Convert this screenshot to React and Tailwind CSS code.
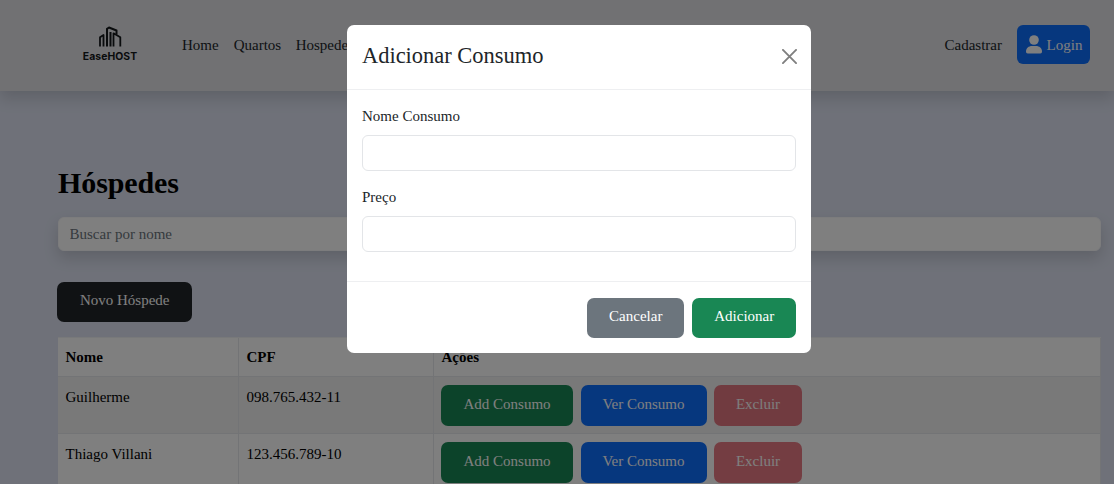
const guests = [
  { name: 'Guilherme', cpf: '098.765.432-11' },
  { name: 'Thiago Villani', cpf: '123.456.789-10' },
];

const buttonBase = 'rounded-[7px] text-center leading-[22px] flex justify-center shrink-0 items-start';

function Logo() {
  return (
    <div className="flex w-[56px] flex-col items-center text-[#15181b]">
      <svg width="24" height="21" viewBox="0 0 24 21" fill="none" stroke="currentColor" strokeWidth="2" strokeLinejoin="round">
        <path d="M2 20.500V11.200L5.500 9V20.500" strokeWidth="1.800" />
        <path d="M9 20.500V2.800L11 1.500L18.500 4.500V8.500M12.500 20.500V6" />
        <path d="M15.500 20.500V7.300L22.300 11.300V20.500" strokeWidth="1.800" />
      </svg>
      <span className="mt-[5px] font-['Inter',sans-serif] text-[10.400px] font-bold leading-[10px] tracking-[0.050px]">EaseHOST</span>
    </div>
  );
}

function Header() {
  return (
    <header className="relative flex h-[91px] shrink-0 items-center bg-[#e2e3e7] pb-[2px] pl-[82px] pr-[24px] text-[#212529] shadow-[0_7px_15px_rgba(0,0,0,0.15)]">
      <div className="mb-px"><Logo /></div>
      <nav className="ml-[44px] flex gap-[15px]">
        <a>Home</a>
        <a>Quartos</a>
        <a className="-ml-[0.5px]">Hospedes</a>
      </nav>
      <a className="ml-auto">Cadastrar</a>
      <button className="ml-[15px] flex h-[39px] w-[73px] items-center justify-center gap-[5px] rounded-md bg-[#0d6efd] pl-px text-white">
        <svg width="16" height="19" viewBox="0 0 16 19" fill="currentColor">
          <circle cx="8" cy="5" r="4.8" />
          <path d="M0 16.5C0 13.2 2.7 11 6 11h4c3.300 0 6 2.200 6 5.500 0 1.200-.6 2-1.700 2H1.700C.6 18.500 0 17.700 0 16.500z" />
        </svg>
        Login
      </button>
    </header>
  );
}

function GuestTable() {
  const row = 'grid grid-cols-[181px_195px_1fr] border-b border-[#e6e9ec]';
  const cell = 'border-r border-[#e6e9ec] pl-[7.5px] leading-[22px]';
  return (
    <div className="ml-px mt-[15px] border-t border-[#f1f2f4] bg-white text-black">
      <div className={row + ' h-[39px] font-bold'}>
        <div className={cell + ' pt-[8px]'}>Nome</div>
        <div className={cell + ' pt-[8px]'}>CPF</div>
        <div className={cell + ' pt-[8px]'}>Ações</div>
      </div>
      {guests.map((guest, i) => (
        <div key={guest.cpf} className={row + ' h-[57px] ' + (i % 2 === 0 ? 'bg-[#f2f2f2]' : 'bg-white')}>
          <div className={cell + ' pt-[9px]'}>{guest.name}</div>
          <div className={cell + ' pt-[9px]'}>{guest.cpf}</div>
          <div className="flex items-start gap-[7.5px] border-r border-[#e6e9ec] pl-[7px] pt-[8px] leading-[22px] text-white">
            <button className={buttonBase + ' h-[41px] pt-[8px] w-[132px] bg-[#198754]'}>Add Consumo</button>
            <button className={buttonBase + ' h-[41px] pt-[8px] w-[126px] bg-[#0d6efd]'}>Ver Consumo</button>
            <button className={buttonBase + ' h-[41px] pt-[8px] w-[88px] bg-[#dc3545] opacity-65'}>Excluir</button>
          </div>
        </div>
      ))}
    </div>
  );
}

function Modal() {
  return (
    <div className="absolute inset-0 bg-black/50 pt-[25px]">
      <div className="ml-[347px] flex h-[328px] w-[464px] flex-col rounded-[7px] bg-white text-[#212529]">
        <div className="flex h-[65px] items-center justify-between border-b border-[#eeeff1] pl-[15px] pr-[14px] pb-[2px]">
          <h5 className="text-[22.5px] leading-[34px] tracking-[-0.03px]">Adicionar Consumo</h5>
          <svg width="15" height="15" viewBox="0 0 16 16" fill="none" stroke="#7f7f7f" strokeWidth="2" strokeLinecap="round">
            <path d="M1 1l14 14M15 1L1 15" />
          </svg>
        </div>
        <div className="flex h-[192px] flex-col border-b border-[#eeeff1] px-[15px] pt-[15px]">
          <label className="mb-[8px] leading-[22px]">Nome Consumo</label>
          <input className="h-[36px] w-full shrink-0 rounded-md border border-[#e3e5e8]" />
          <label className="mb-[8px] mt-[15px] leading-[22px]">Preço</label>
          <input className="h-[36px] w-full shrink-0 rounded-md border border-[#e3e5e8]" />
        </div>
        <div className="flex justify-end gap-[7.5px] px-[15px] pt-[16px] text-white">
          <button className={buttonBase + ' h-[40px] pt-[7px] pl-px w-[97.5px] bg-[#6c757d]'}>Cancelar</button>
          <button className={buttonBase + ' h-[40px] pt-[7px] pl-px w-[104.5px] bg-[#198754]'}>Adicionar</button>
        </div>
      </div>
    </div>
  );
}

export default function App() {
  return (
    <div className="relative flex h-[484px] w-[1114px] flex-col overflow-hidden bg-[#dee3f2] font-['Liberation_Serif',serif] text-[15px] leading-[22px]">
      <Header />
      <main className="flex flex-col pl-[57px] pr-[13px] pt-[74px]">
        <h1 className="ml-px text-[30px] font-bold leading-[36px] tracking-[-0.1px] text-black">Hóspedes</h1>
        <input
          placeholder="Buscar por nome"
          className="ml-px mt-[16px] h-[34px] rounded-[6px] border border-[#f8f9fa] bg-white px-[10.5px] shadow-[0_7px_15px_rgba(0,0,0,0.15)] placeholder:text-[#6c757d]"
        />
        <button className={buttonBase + ' mt-[31px] h-[40px] w-[134.5px] bg-[#212529] pt-[7px] pl-px text-white'}>Novo Hóspede</button>
        <GuestTable />
      </main>
      <Modal />
    </div>
  );
}
